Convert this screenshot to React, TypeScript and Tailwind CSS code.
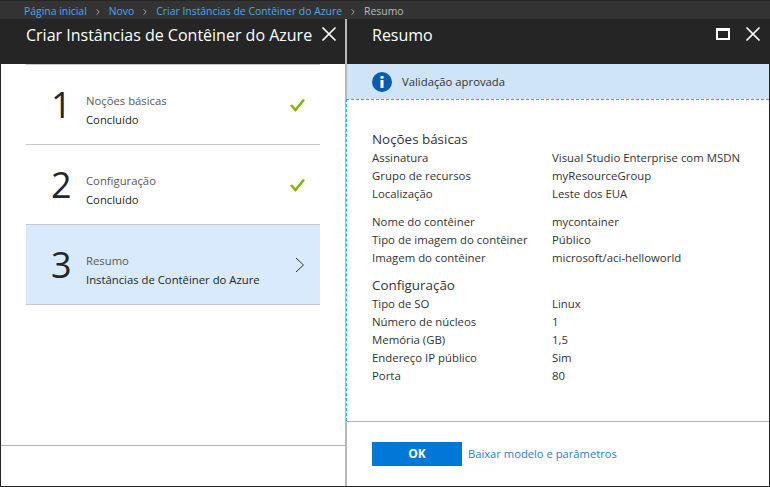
import { X, ChevronRight } from 'lucide-react';

const font = "font-['Open_Sans','Noto_Sans',sans-serif]";

const basics = [
  ['Assinatura', 'Visual Studio Enterprise com MSDN'],
  ['Grupo de recursos', 'myResourceGroup'],
  ['Localização', 'Leste dos EUA'],
];
const container = [
  ['Nome do contêiner', 'mycontainer'],
  ['Tipo de imagem do contêiner', 'Público'],
  ['Imagem do contêiner', 'microsoft/aci-helloworld'],
];
const config = [
  ['Tipo de SO', 'Linux'],
  ['Número de núcleos', '1'],
  ['Memória (GB)', '1,5'],
  ['Endereço IP público', 'Sim'],
  ['Porta', '80'],
];

function Rows({ rows }: { rows: string[][] }) {
  return (
    <>
      {rows.map(([label, value]) => (
        <div key={label} className="flex h-[18px] items-center text-[11.4px] leading-[18px] text-[#333]">
          <span className="w-[180px] shrink-0 whitespace-nowrap">{label}</span>
          <span className="whitespace-nowrap">{value}</span>
        </div>
      ))}
    </>
  );
}

function Step({ num, title, sub, active }: { num: string; title: string; sub: string; active?: boolean }) {
  return (
    <div className={`flex h-[80px] items-center border-b border-[#c8c8c8] pl-[25px] pr-[15px] ${active ? 'bg-[#d8eafc]' : ''}`}>
      <span className="w-[35px] text-[36px] leading-none text-[#252525]">{num}</span>
      <div className="flex-1 pt-[10px]">
        <div className="text-[11.3px] leading-[19px] text-[#595959]">{title}</div>
        <div className="whitespace-nowrap text-[11.3px] leading-[19px] text-[#252525]">{sub}</div>
      </div>
      {active ? (
        <svg width="10" height="16" viewBox="0 0 10 16" fill="none" stroke="#333" strokeWidth="1">
          <path d="M1 1l7.5 7L1 15" />
        </svg>
      ) : (
        <svg width="15" height="14" viewBox="0 0 15 14" fill="none" stroke="#7fba00" strokeWidth="2.6">
          <path d="M1 7l4.5 5L14 1.5" />
        </svg>
      )}
    </div>
  );
}

export default function App() {
  return (
    <div className={`flex h-[487px] w-[770px] flex-col overflow-hidden bg-white ${font}`}>
      {/* Breadcrumb */}
      <div className="flex h-[19px] shrink-0 items-center gap-[6px] border-t border-[#252525] bg-[#333333] pl-[24px] pt-[3px] text-[10.4px] text-[#4aa5f0]">
        <span>Página inicial</span>
        <ChevronRight size={10} className="text-[#bbb]" />
        <span>Novo</span>
        <ChevronRight size={10} className="text-[#bbb]" />
        <span>Criar Instâncias de Contêiner do Azure</span>
        <ChevronRight size={10} className="text-[#bbb]" />
        <span className="text-[#bbbbbb]">Resumo</span>
      </div>

      <div className="flex min-h-0 flex-1 border-x border-b border-[#252525]">
        {/* Left blade */}
        <div className="flex w-[344px] shrink-0 flex-col">
          <div className="flex h-[45px] shrink-0 items-start justify-between bg-[#252525] pl-[25px] pr-[4px] pt-[3px] text-white">
            <span className="whitespace-nowrap pt-[1px] text-[16px] leading-[24px]">Criar Instâncias de Contêiner do Azure</span>
            <X size={24} strokeWidth={1.7} />
          </div>
          <div className="flex-1">
            <div className="mx-[25px] border-t border-[#c8c8c8]">
              <Step num="1" title="Noções básicas" sub="Concluído" />
              <Step num="2" title="Configuração" sub="Concluído" />
              <Step num="3" title="Resumo" sub="Instâncias de Contêiner do Azure" active />
            </div>
          </div>
          <div className="h-[41px] shrink-0 border-t border-[#b4b4b4]" />
        </div>

        {/* Right blade */}
        <div className="flex min-w-0 flex-1 flex-col border-l-2 border-[#b8b8b8]">
          <div className="flex h-[45px] shrink-0 items-start justify-between bg-[#252525] pl-[25px] pr-[4px] pt-[3px] text-white">
            <span className="pt-[1px] text-[16px] leading-[24px]">Resumo</span>
            <div className="flex items-center gap-[11px]">
              <div className="h-[12px] w-[14px] border-x-2 border-b-2 border-t-[3px] border-white" />
              <X size={24} strokeWidth={1.7} />
            </div>
          </div>
          <div className="flex h-[35px] shrink-0 items-center gap-[10px] bg-[#cfe4f7] pl-[25px]">
            <svg width="20" height="20" viewBox="0 0 20 20">
              <circle cx="10" cy="10" r="10" fill="#0a5cb0" />
              <rect x="8.5" y="8" width="3" height="8" fill="#fff" />
              <rect x="8.5" y="4" width="3" height="2.6" fill="#fff" />
            </svg>
            <span className="pt-[2px] text-[11.3px] text-[#333]">Validação aprovada</span>
          </div>
          <div className="-ml-px flex-1 border-l border-t border-dashed border-[#00bcf2] bg-white pl-[25px] pt-[29px]">
            <div className="text-[13.4px] leading-[20px] text-[#333]">Noções básicas</div>
            <Rows rows={basics} />
            <div className="h-[10px]" />
            <Rows rows={container} />
            <div className="mt-[8px] text-[13.4px] leading-[20px] text-[#333]">Configuração</div>
            <Rows rows={config} />
          </div>
          <div className="flex h-[65px] shrink-0 items-start gap-[6px] border-t border-[#b4b4b4] pl-[25px] pt-[20px]">
            <div className="flex h-[24px] w-[90px] items-center justify-center bg-[#0078d7] text-[12px] font-bold text-white">OK</div>
            <span className="text-[11.2px] leading-[24px] text-[#2c7cd6]">Baixar modelo e parâmetros</span>
          </div>
        </div>
      </div>
    </div>
  );
}
